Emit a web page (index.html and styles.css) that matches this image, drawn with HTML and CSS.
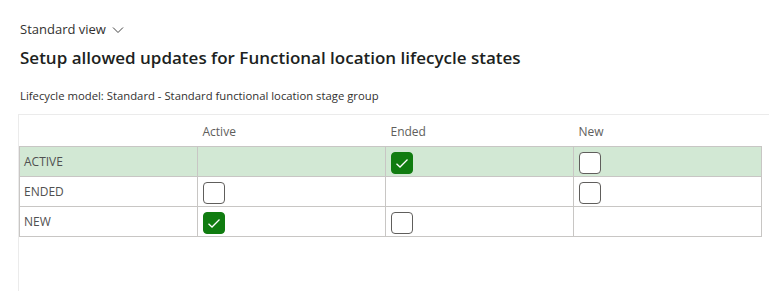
FILE: index.html
```html
<!DOCTYPE html>
<html lang="en">
<head>
<meta charset="utf-8">
<link rel="stylesheet" href="styles.css">
</head>
<body>
<div class="page">
  <div class="view-picker">Standard view
    <svg class="chev" width="12" height="8" viewBox="0 0 12 8"><path d="M1 1.5 L6 6.5 L11 1.5" fill="none" stroke="#444" stroke-width="1"/></svg>
  </div>
  <h1 class="title">Setup allowed updates for Functional location lifecycle states</h1>
  <div class="model">Lifecycle model: Standard - Standard functional location stage group</div>
  <div class="grid-wrap">
    <table class="grid">
      <colgroup><col class="c0"><col class="c1"><col class="c1"><col class="c1"></colgroup>
      <thead>
        <tr><th></th><th>Active</th><th>Ended</th><th>New</th></tr>
      </thead>
      <tbody>
        <tr class="sel">
          <td class="lbl">ACTIVE</td>
          <td></td>
          <td><span class="cb on"><svg width="14" height="11" viewBox="0 0 14 11"><path d="M1.5 5.8 L5 9 L12.5 1.5" fill="none" stroke="#fff" stroke-width="1.3"/></svg></span></td>
          <td><span class="cb"></span></td>
        </tr>
        <tr>
          <td class="lbl">ENDED</td>
          <td><span class="cb"></span></td>
          <td></td>
          <td><span class="cb"></span></td>
        </tr>
        <tr>
          <td class="lbl">NEW</td>
          <td><span class="cb on"><svg width="14" height="11" viewBox="0 0 14 11"><path d="M1.5 5.8 L5 9 L12.5 1.5" fill="none" stroke="#fff" stroke-width="1.3"/></svg></span></td>
          <td><span class="cb"></span></td>
          <td></td>
        </tr>
      </tbody>
    </table>
  </div>
</div>
</body>
</html>
```
FILE: styles.css
```css
html, body { margin: 0; padding: 0; background: #fff; }
body { font-family: "Open Sans", "Noto Sans", sans-serif; color: #323130; overflow: hidden; height: 291px; }
.page { padding: 21px 0 0 0; }
.view-picker { margin-left: 20px; font-size: 13px; line-height: 16px; color: #323130; display: flex; align-items: center; gap: 6px; }
.chev { margin-top: 1px; }
.title { margin: 8px 0 0 20px; font-size: 17px; line-height: 26px; font-weight: 600; color: #201f1e; }
.model { margin: 18px 0 0 20px; font-size: 11.3px; line-height: 14px; color: #323130; }
.grid-wrap { margin: 11px 0 0 18px; border-top: 1px solid #ebebeb; border-left: 1px solid #ebebeb; height: 180px; }
.grid { border-collapse: collapse; table-layout: fixed; width: 742px; }
.c0 { width: 178px; }
.c1 { width: 188px; }
th { height: 25px; padding: 0 0 6px 5px; font-size: 12px; font-weight: 400; color: #605e5c; text-align: left; vertical-align: bottom; }
td { height: 30px; padding: 5px 0 0 5px; border: 1px solid #c8c6c4; vertical-align: top; box-sizing: border-box; }
td.lbl { vertical-align: middle; padding: 0 0 0 4px; font-size: 12px; color: #505050; }
tr.sel td { background: #d2e8d4; }
.cb { display: block; width: 22px; height: 22px; box-sizing: border-box; border: 1px solid #605e5c; border-radius: 4px; background: #fff; }
.cb.on { background: #107c10; border-color: #107c10; display: flex; align-items: center; justify-content: center; }
```
